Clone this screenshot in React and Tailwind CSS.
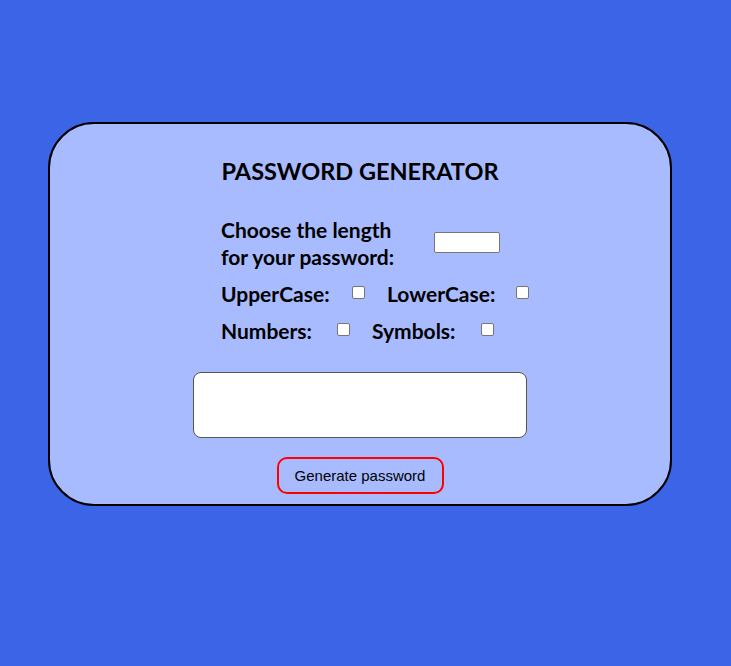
import React from "react";

export default function App() {
  const lab = "text-[21px] font-bold leading-[27px] text-black whitespace-nowrap";
  const cb = "shrink-0 w-[13px] h-[13px] border border-[#767676] rounded-[2px] bg-white -mt-[2px]";
  return (
    <div className="w-[731px] h-[666px] bg-[#3c64e6] pt-[122px] pl-[48px]" style={{ fontFamily: "Lato, 'Open Sans', sans-serif" }}>
      <div className="w-[624px] h-[384px] bg-[#a8bbff] border-2 border-black rounded-[46px] flex flex-col items-center">
        <h2 className="mt-[32px] text-[23.5px] font-bold leading-[30px] text-black">PASSWORD GENERATOR</h2>
        <div className="mt-[30px] w-[278px] flex flex-col">
          <div className="flex items-center">
            <div className={lab}>Choose the length<br />for your password:</div>
            <div className="ml-auto mr-[-1px] -mt-[2px] shrink-0 w-[66px] h-[21px] bg-white border border-[#767676] rounded-[2px]"></div>
          </div>
          <div className="flex items-center mt-[10px]">
            <span className={"w-[131px] shrink-0 " + lab}>UpperCase:</span>
            <div className={cb}></div>
            <span className={"ml-[22px] w-[129px] shrink-0 " + lab}>LowerCase:</span>
            <div className={cb}></div>
          </div>
          <div className="flex items-center mt-[10px]">
            <span className={"w-[116px] shrink-0 " + lab}>Numbers:</span>
            <div className={cb}></div>
            <span className={"ml-[22px] w-[109px] shrink-0 " + lab}>Symbols:</span>
            <div className={cb}></div>
          </div>
        </div>
        <div className="mt-[28px] w-[334px] h-[66px] bg-white border border-[#555] rounded-[8px]"></div>
        <button className="mt-[19px] w-[167px] h-[37px] pt-[2px] border-2 border-[#ff0000] rounded-[10px] text-[15px] text-black" style={{ fontFamily: "'Liberation Sans', Arial, sans-serif" }}>Generate password</button>
      </div>
    </div>
  );
}
